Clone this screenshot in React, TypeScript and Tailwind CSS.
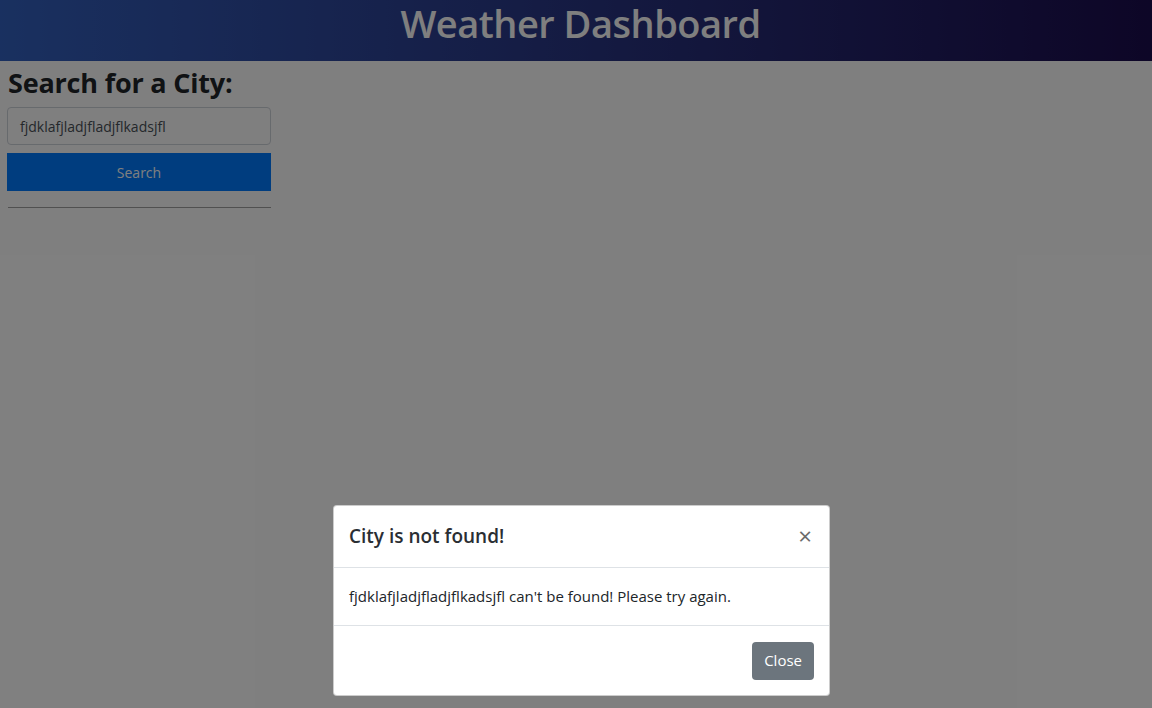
import React from "react";

const FONT = { fontFamily: '"Open Sans", "Noto Sans", Arial, sans-serif' };

function Header() {
  return (
    <header className="h-[61px] w-full bg-gradient-to-r from-[#3361c0] to-[#1b0c4e] flex items-start justify-center pl-[9px] pt-[1px]">
      <h1 className="text-[38px] font-semibold text-white leading-[44px] tracking-[-0.5px]">Weather Dashboard</h1>
    </header>
  );
}

function SearchPanel() {
  return (
    <aside className="w-[264px] ml-[7px] pt-[5px]">
      <h2 className="text-[27px] font-bold text-[#212529] leading-[34px] ml-[1px] tracking-[-0.2px]">Search for a City:</h2>
      <div className="mt-[7px] h-[38px] border border-[#ced4da] rounded-[4px] bg-white flex items-center px-[12px] text-[14px] text-[#495057]">
        fjdklafjladjfladjflkadsjfl
      </div>
      <button className="mt-[8px] w-full h-[38px] bg-[#007bff] text-white text-[14px] flex items-center justify-center">Search</button>
      <hr className="mt-[16px] border-t border-[#a0a0a0] ml-[1px]" />
    </aside>
  );
}

function Modal() {
  return (
    <div className="absolute left-[333px] top-[505px] w-[497px] bg-white rounded-[4px] border border-black/20">
      <div className="h-[62px] flex items-center justify-between px-[15px] border-b border-[#dee2e6]">
        <h5 className="text-[19px] font-semibold text-[#2a2e33]">City is not found!</h5>
        <span className="text-[24px] leading-none text-[#6b6b6b] mr-[2px] -mt-[2px]">×</span>
      </div>
      <div className="h-[57px] flex items-center px-[15px] text-[15px] text-[#212529]">
        fjdklafjladjfladjflkadsjfl can't be found! Please try again.
      </div>
      <div className="h-[70px] flex items-center justify-end px-[15px] border-t border-[#dee2e6]">
        <button className="h-[38px] px-[12px] rounded-[4px] bg-[#6c757d] text-white text-[15px]">Close</button>
      </div>
    </div>
  );
}

export default function App() {
  return (
    <div className="relative w-[1152px] h-[708px] overflow-hidden bg-white" style={FONT}>
      <Header />
      <SearchPanel />
      <div className="absolute inset-0 bg-black/50" />
      <Modal />
    </div>
  );
}
